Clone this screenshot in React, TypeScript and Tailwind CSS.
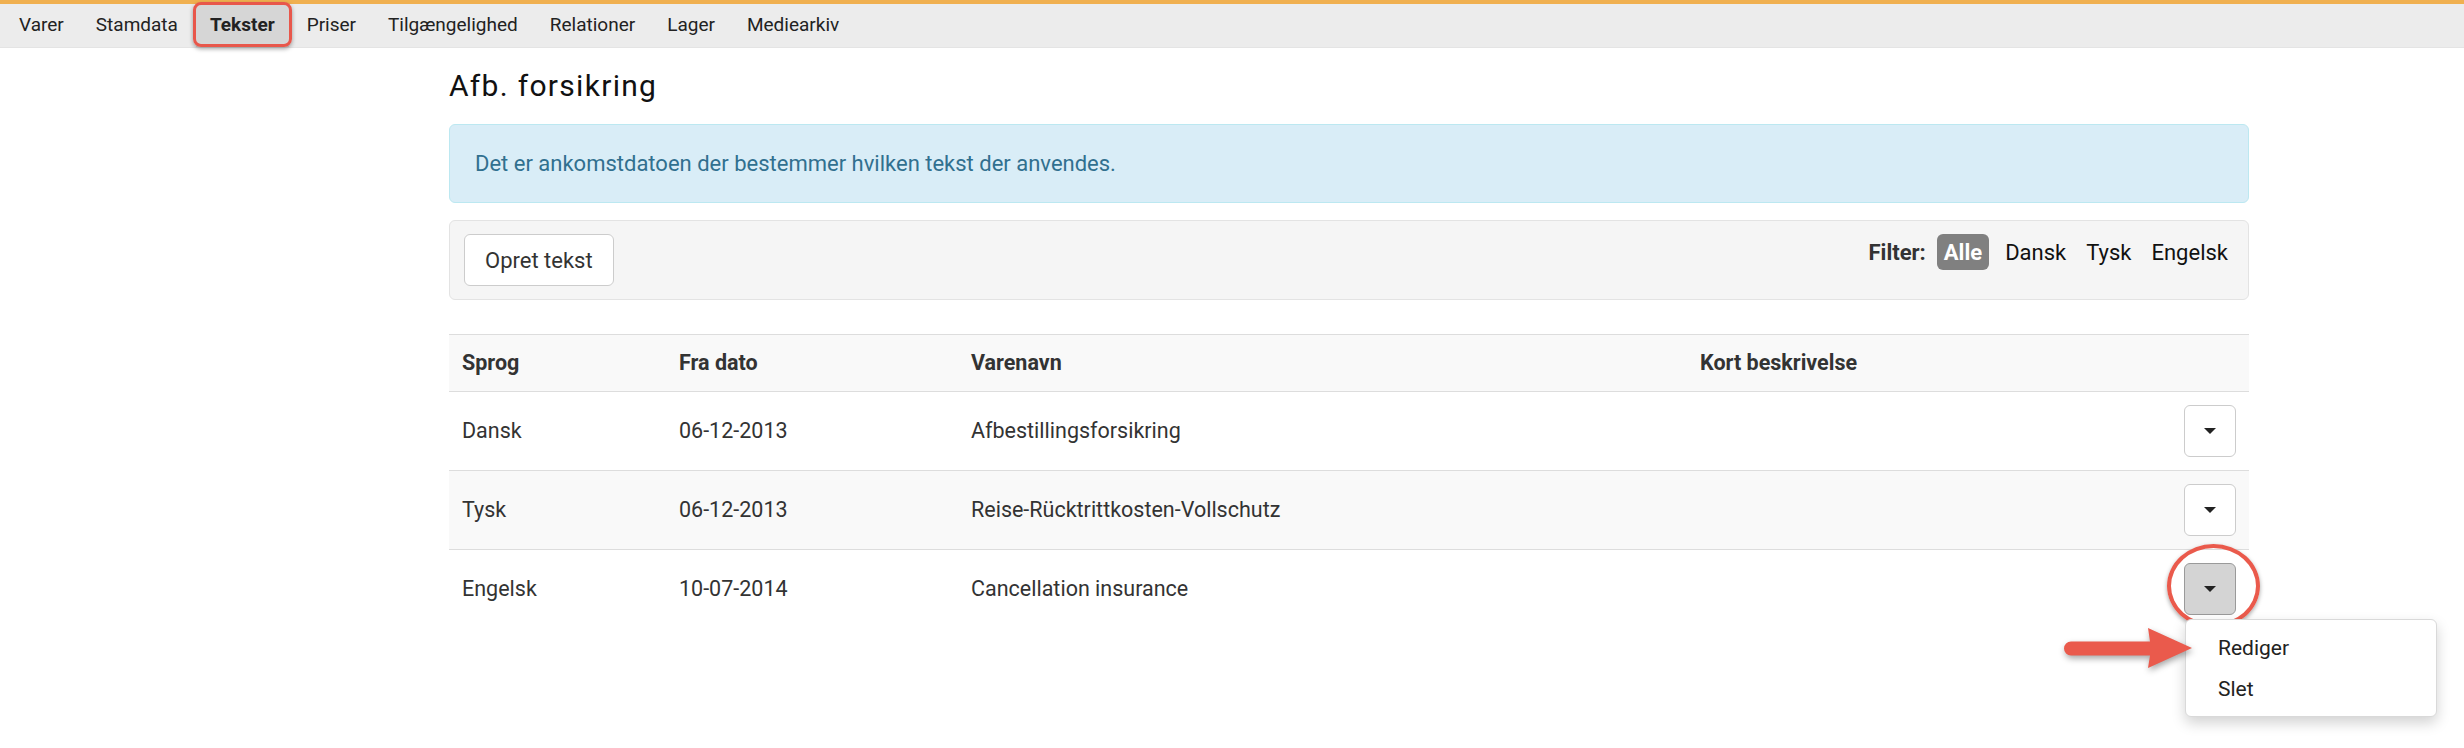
import React from "react";

const navItems = ["Varer", "Stamdata", "Tekster", "Priser", "Tilgængelighed", "Relationer", "Lager", "Mediearkiv"];

const rows = [
  { lang: "Dansk", date: "06-12-2013", name: "Afbestillingsforsikring" },
  { lang: "Tysk", date: "06-12-2013", name: "Reise-Rücktrittkosten-Vollschutz" },
  { lang: "Engelsk", date: "10-07-2014", name: "Cancellation insurance" },
];

function Caret() {
  return <span className="inline-block w-0 h-0 border-x-[6px] border-t-[6px] border-x-transparent border-t-[#222]" />;
}

function RedArrow() {
  return (
    <svg
      className="absolute left-[-122px] top-[4px] drop-shadow-[1px_3px_3px_rgba(0,0,0,0.35)]"
      width="130"
      height="48"
      viewBox="0 0 130 48"
    >
      <path
        d="M7 17.5 L86 17.5 L84 4 L128 24 L84 44 L86 31.5 L7 31.5 A7 7 0 0 1 7 17.5 Z"
        fill="#ea5a4c"
      />
    </svg>
  );
}

export default function App() {
  return (
    <div className="min-h-screen bg-white font-['Roboto',sans-serif] text-[#333]">
      {/* Top navigation */}
      <div className="border-t-4 border-[#f0b050] bg-[#ececec] h-[47px] flex items-stretch pl-[3px] shadow-[0_1px_0_#e4e4e4]">
        {navItems.map((item) => (
          <div
            key={item}
            className={
              item === "Tekster"
                ? "relative flex items-center px-[14px] mx-[2px] text-[19px] font-bold text-[#222] bg-[#d6d6d6]"
                : "flex items-center px-[16px] text-[19px] text-[#222]"
            }
          >
            {item}
            {item === "Tekster" && (
              <span className="absolute -top-[2px] -left-[3px] -right-[3px] bottom-0 rounded-[8px] border-[3px] border-[#e8574b] shadow-[0_2px_4px_rgba(0,0,0,0.35)]" />
            )}
          </div>
        ))}
      </div>

      <div className="ml-[449px] w-[1800px]">
        <h1 className="mt-[22px] mb-[21px] h-[34px] leading-[34px] text-[30px] tracking-[1.3px] text-[#111]">
          Afb. forsikring
        </h1>

        {/* Info alert */}
        <div className="h-[79px] flex items-center px-[25px] rounded-[6px] border border-[#bce8f1] bg-[#d9edf7] text-[#31708f] text-[22px]">
          Det er ankomstdatoen der bestemmer hvilken tekst der anvendes.
        </div>

        {/* Toolbar */}
        <div className="mt-[17px] flex justify-between items-start px-[14px] py-[13px] rounded-[6px] border border-[#e3e3e3] bg-[#f5f5f5]">
          <button className="h-[52px] px-[20px] rounded-[6px] border border-[#ccc] bg-white text-[22px] text-[#333]">
            Opret tekst
          </button>
          <div className="flex items-center h-[36px] text-[22px] text-[#111]">
            <span className="font-bold text-[#333] mr-[11px]">Filter:</span>
            <span className="h-[36px] px-[7px] flex items-center rounded-[6px] bg-[#808080] text-white font-bold mr-[6px]">
              Alle
            </span>
            <span className="px-[10px]">Dansk</span>
            <span className="px-[10px]">Tysk</span>
            <span className="pl-[10px] pr-[6px]">Engelsk</span>
          </div>
        </div>

        {/* Table */}
        <table className="mt-[34px] w-full border-collapse text-[21.5px] text-left">
          <thead>
            <tr className="h-[57px] bg-[#f9f9f9] border-t border-b border-[#ddd]">
              <th className="w-[230px] pl-[13px] font-bold">Sprog</th>
              <th className="w-[292px] pl-0 font-bold">Fra dato</th>
              <th className="w-[729px] font-bold">Varenavn</th>
              <th className="font-bold">Kort beskrivelse</th>
              <th className="w-[80px]"></th>
            </tr>
          </thead>
          <tbody>
            {rows.map((r, i) => (
              <tr
                key={r.lang}
                className={
                  i === 1
                    ? "h-[79px] bg-[#f9f9f9] border-b border-[#ddd]"
                    : i === 2
                    ? "h-[79px] bg-white"
                    : "h-[79px] bg-white border-b border-[#ddd]"
                }
              >
                <td className="pl-[13px]">{r.lang}</td>
                <td>{r.date}</td>
                <td>{r.name}</td>
                <td></td>
                <td className="pr-[13px]">
                  <div className="relative flex justify-end">
                    <button
                      className={
                        i === 2
                          ? "relative w-[52px] h-[52px] flex items-center justify-center rounded-[6px] border border-[#9a9a9a] bg-[#d4d4d4]"
                          : "w-[52px] h-[52px] flex items-center justify-center rounded-[6px] border border-[#ccc] bg-white"
                      }
                    >
                      <Caret />
                      {i === 2 && (
                        <span className="absolute -left-[18px] -top-[20px] w-[93px] h-[84px] rounded-[50%] border-[4px] border-[#ea5a4c] shadow-[0_2px_4px_rgba(0,0,0,0.35)]" />
                      )}
                    </button>
                    {i === 2 && (
                      <div className="absolute right-[-201px] top-[56px] w-[252px] h-[98px] py-[7px] rounded-[6px] border border-[#d9d9d9] bg-white shadow-[0_6px_14px_rgba(0,0,0,0.18)] text-[21px] text-[#222]">
                        <div className="h-[42px] leading-[42px] pl-[32px]">Rediger</div>
                        <div className="h-[40px] leading-[40px] pl-[32px]">Slet</div>
                        <RedArrow />
                      </div>
                    )}
                  </div>
                </td>
              </tr>
            ))}
          </tbody>
        </table>
      </div>
    </div>
  );
}
